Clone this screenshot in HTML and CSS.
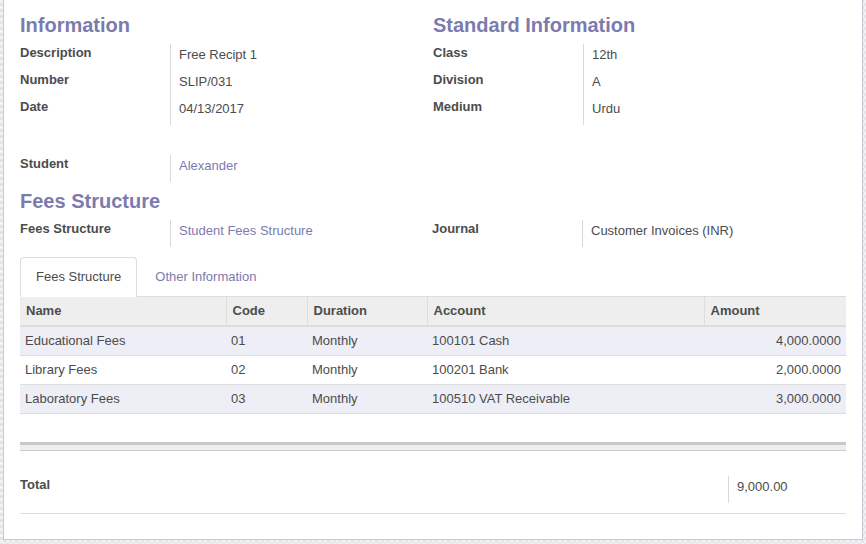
FILE: index.html
```html
<!DOCTYPE html>
<html>
<head>
<meta charset="utf-8">
<link rel="stylesheet" href="styles.css">
</head>
<body>
<div class="sheet">
  <div class="cols">
    <div class="group">
      <h2 class="sep-title">Information</h2>
      <div class="field"><div class="lbl">Description</div><div class="val">Free Recipt 1</div></div>
      <div class="field"><div class="lbl">Number</div><div class="val">SLIP/031</div></div>
      <div class="field"><div class="lbl">Date</div><div class="val">04/13/2017</div></div>
    </div>
    <div class="group">
      <h2 class="sep-title">Standard Information</h2>
      <div class="field"><div class="lbl">Class</div><div class="val">12th</div></div>
      <div class="field"><div class="lbl">Division</div><div class="val">A</div></div>
      <div class="field"><div class="lbl">Medium</div><div class="val">Urdu</div></div>
    </div>
  </div>

  <div class="cols student">
    <div class="group">
      <div class="field"><div class="lbl">Student</div><div class="val link">Alexander</div></div>
    </div>
  </div>

  <h2 class="sep-title fees-title">Fees Structure</h2>
  <div class="cols">
    <div class="group">
      <div class="field"><div class="lbl">Fees Structure</div><div class="val link">Student Fees Structure</div></div>
    </div>
    <div class="group shift">
      <div class="field"><div class="lbl">Journal</div><div class="val">Customer Invoices (INR)</div></div>
    </div>
  </div>

  <div class="tabs">
    <div class="tab active">Fees Structure</div>
    <div class="tab">Other Information</div>
  </div>

  <table class="list">
    <colgroup>
      <col class="c-name"><col class="c-code"><col class="c-dur"><col class="c-acc"><col class="c-amt">
    </colgroup>
    <thead>
      <tr><th>Name</th><th>Code</th><th>Duration</th><th>Account</th><th>Amount</th></tr>
    </thead>
    <tbody>
      <tr><td>Educational Fees</td><td>01</td><td>Monthly</td><td>100101 Cash</td><td class="num">4,000.0000</td></tr>
      <tr><td>Library Fees</td><td>02</td><td>Monthly</td><td>100201 Bank</td><td class="num">2,000.0000</td></tr>
      <tr><td>Laboratory Fees</td><td>03</td><td>Monthly</td><td>100510 VAT Receivable</td><td class="num">3,000.0000</td></tr>
    </tbody>
  </table>
  <div class="list-foot"></div>

  <div class="total">
    <div class="total-lbl">Total</div>
    <div class="total-val">9,000.00</div>
  </div>
</div>
</body>
</html>
```

FILE: styles.css
```css
html, body {
  margin: 0;
  padding: 0;
}
body {
  width: 866px;
  height: 544px;
  overflow: hidden;
  font-family: "Liberation Sans", Arial, sans-serif;
  font-size: 13px;
  color: #4c4c4c;
  background: repeating-conic-gradient(#e4e4e9 0 25%, #f2f2f4 0 50%) 0 0 / 6px 6px;
}
.sheet {
  box-sizing: border-box;
  margin-left: 3px;
  width: 860px;
  height: 540px;
  background: #fff;
  border: 1px solid #c8c8d3;
  border-top: none;
  padding: 14px 16px 0 16px;
}
.cols {
  display: grid;
  grid-template-columns: 413px 413px;
}
.sep-title {
  margin: 0 0 8px 0;
  height: 22px;
  line-height: 22px;
  font-size: 20px;
  font-weight: bold;
  color: #7c7bad;
}
.field {
  display: flex;
  height: 27px;
}
.lbl {
  box-sizing: border-box;
  width: 150px;
  flex: none;
  padding-top: 1px;
  line-height: 16px;
  font-weight: bold;
}
.val {
  border-left: 1px solid #d9d9d9;
  padding: 3px 0 0 8px;
  line-height: 16px;
}
.link {
  color: #7c7bad;
}
.student {
  margin-top: 30px;
}
.fees-title {
  margin-top: 8px;
}
.shift {
  margin-left: -1px;
}
.tabs {
  margin-top: 10px;
  display: flex;
  border-bottom: 1px solid #ddd;
  height: 39px;
}
.tab {
  box-sizing: border-box;
  height: 39px;
  padding: 10px 15px;
  line-height: 18px;
  border: 1px solid transparent;
  border-radius: 4px 4px 0 0;
  margin-right: 2px;
  color: #7c7bad;
}
.tab.active {
  height: 40px;
  color: #4c4c4c;
  background: #fff;
  border-color: #ddd;
  border-bottom-color: #fff;
}
.list {
  width: 826px;
  table-layout: fixed;
  border-collapse: collapse;
  border-spacing: 0;
}
.c-name { width: 206px; }
.c-code { width: 81px; }
.c-dur { width: 120px; }
.c-acc { width: 277px; }
.c-amt { width: 142px; }
.list th {
  height: 28px;
  padding: 0 5px 0 6px;
  text-align: left;
  font-weight: bold;
  background: #eee;
  border-bottom: 2px solid #ddd;
  line-height: 16px;
}
.list th + th {
  border-left: 1px solid #ddd;
}
.list td {
  height: 28px;
  padding: 0 5px;
  line-height: 16px;
  border-bottom: 1px solid #ddd;
  white-space: nowrap;
}
.list td.num {
  text-align: right;
  padding-right: 5px;
}
.list tbody tr:nth-child(odd) {
  background: #eeeef7;
}
.list-foot {
  margin-top: 28px;
  height: 5px;
  background: #eee;
  border-top: 3px solid #c8c8c8;
  border-bottom: 1px solid #ccc;
}
.total {
  margin-top: 25px;
  display: flex;
  height: 27px;
  padding-bottom: 10px;
  border-bottom: 1px solid #ddd;
}
.total-lbl {
  flex: 1;
  padding-top: 1px;
  font-weight: bold;
  line-height: 16px;
}
.total-val {
  width: 109px;
  border-left: 1px solid #d9d9d9;
  padding: 3px 0 0 8px;
  line-height: 16px;
}
```
